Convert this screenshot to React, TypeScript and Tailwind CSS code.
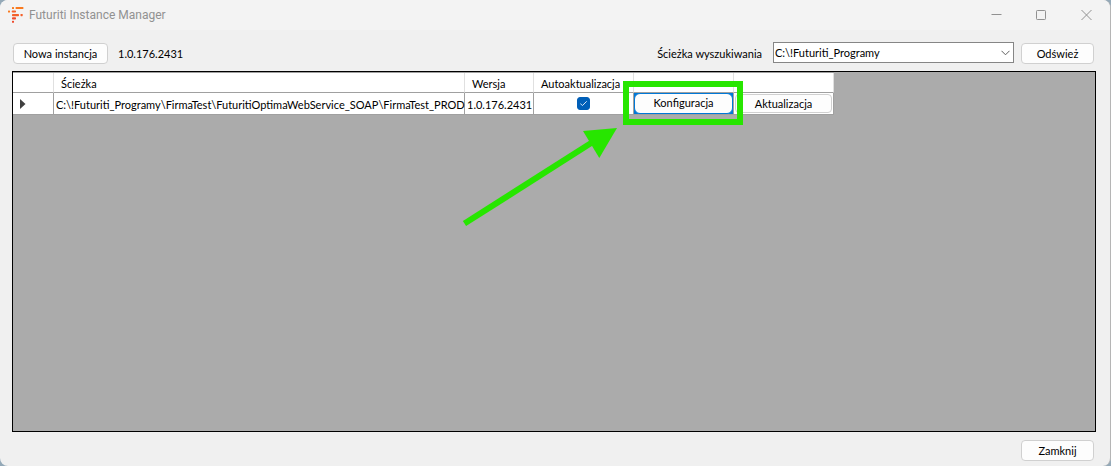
import React, { useState } from 'react';

interface Instance {
    id: string;
    path: string;
    version: string;
    autoUpdate: boolean;
}

const INITIAL_INSTANCES: Instance[] = [
    {
        id: 'prod',
        path: 'C:\\!Futuriti_Programy\\FirmaTest\\FuturitiOptimaWebService_SOAP\\FirmaTest_PROD',
        version: '1.0.176.2431',
        autoUpdate: true,
    },
];

const buttonClass = "rounded border border-[#d0d0d0] bg-[#fdfdfd] text-center hover:bg-[#e5f1fb]";
const headClass = "h-5 border-r border-b border-r-[#e0e0e0] border-b-[#a0a0a0] px-[7px] pt-0.5 pb-0 text-left leading-4 font-normal whitespace-nowrap";
const cellClass = "h-[22px] border-r border-b border-[#a0a0a0] whitespace-nowrap";

const Logo: React.FC = () => (
    <svg width="16" height="16" viewBox="0 0 16 16" aria-hidden="true">
        <g fill="#f97a1f">
            <rect x="4" y="0" width="2" height="2" rx="0.6" />
            <rect x="7.500" y="0" width="8" height="2" rx="0.8" />
            <rect x="0" y="3.600" width="2" height="2" rx="0.6" />
        </g>
        <g fill="#f4602a">
            <rect x="3.700" y="3.400" width="4.300" height="2.200" rx="0.8" />
            <rect x="4" y="7" width="7" height="2.200" rx="0.8" />
            <rect x="12.500" y="7" width="2.200" height="2.200" rx="0.6" />
        </g>
        <g fill="#ee4b2e">
            <rect x="4" y="10.300" width="4" height="2.200" rx="0.8" />
            <rect x="4" y="13.800" width="2" height="2" rx="0.6" />
        </g>
    </svg>
);

const TitleBar: React.FC = () => (
    <header className="flex h-[30px] items-center bg-[#f3f3f3] pr-px pl-2 text-[#919191]">
        <Logo />
        <h1 className="ml-[5px] flex-1 font-[Roboto,sans-serif] text-xs">Futuriti Instance Manager</h1>
        <button type="button" aria-label="Minimalizuj" className="flex h-full w-[45px] items-center justify-center hover:bg-gray-200">
            <svg width="11" height="11" viewBox="0 0 11 11" stroke="currentColor"><path d="M0.500 4.500h10" /></svg>
        </button>
        <button type="button" aria-label="Maksymalizuj" className="flex h-full w-[45px] items-center justify-center hover:bg-gray-200">
            <svg width="11" height="11" viewBox="0 0 11 11" fill="none" stroke="currentColor"><rect x="0.500" y="0.500" width="9" height="9" rx="0.800" /></svg>
        </button>
        <button type="button" aria-label="Zamknij okno" className="flex h-full w-[45px] items-center justify-center hover:bg-red-500 hover:text-white">
            <svg width="11" height="11" viewBox="0 0 11 11" stroke="currentColor"><path d="M0.500 0l10 10M10.500 0l-10 10" /></svg>
        </button>
    </header>
);

// Green frame and arrow that point at the configuration button
const Highlight: React.FC = () => (
    <>
        <div className="pointer-events-none absolute -top-3 -right-[10px] -bottom-[11px] -left-[11px] z-10 border-6 border-[#27e600]" />
        <svg className="pointer-events-none absolute top-[35px] -left-[172px] z-10" width="156" height="100" viewBox="0 0 156 100" fill="#27e600" aria-hidden="true">
            <path d="M2.500 95.500L131.500 13.500" stroke="#27e600" strokeWidth="6" />
            <path d="M155 0L121 3L137.300 30z" />
        </svg>
    </>
);

const App: React.FC = () => {
    const [instances, setInstances] = useState(INITIAL_INSTANCES);

    const toggleAutoUpdate = (id: string) => {
        setInstances(prev => prev.map(item => (item.id === id ? { ...item, autoUpdate: !item.autoUpdate } : item)));
    };

    return (
        <div className="bg-[#94a9b8]">
            <div className="flex min-h-screen flex-col overflow-hidden rounded-lg border-r border-[#b5b5b5] bg-[#f0f0f0] font-[Lato,sans-serif] text-[11px] text-black">
                <TitleBar />
                <div className="flex items-end pt-3 pr-4 pb-[7px] pl-[13px] leading-[21px]">
                    <button type="button" className={`${buttonClass} h-[21px] w-[95px] leading-4`}>Nowa instancja</button>
                    <span className="ml-[10px]">1.0.176.2431</span>
                    <label htmlFor="search-path" className="mr-[11px] ml-auto">Ścieżka wyszukiwania</label>
                    <div className="relative pb-px">
                        <select id="search-path" className="block h-[21px] w-[241px] appearance-none border border-[#868686] bg-white pr-5 pl-px leading-4">
                            <option>C:\!Futuriti_Programy</option>
                        </select>
                        <svg className="pointer-events-none absolute top-2 right-1" width="9" height="6" viewBox="0 0 9 6" fill="none" stroke="#606060" aria-hidden="true">
                            <path d="M0.500 0.800l4 4l4-4" />
                        </svg>
                    </div>
                    <button type="button" className={`${buttonClass} ml-[7px] h-[21px] w-[73px] leading-4`}>Odśwież</button>
                </div>

                <main className="mr-[14px] ml-3 flex-1 border border-black bg-[#ababab]">
                    <table className="w-[821px] table-fixed border-separate border-spacing-0 border-t border-[#a0a0a0] bg-white">
                        <colgroup>
                            <col className="w-[41px]" />
                            <col className="w-[411px]" />
                            <col className="w-[69px]" />
                            <col className="w-[100px]" />
                            <col className="w-[100px]" />
                            <col className="w-[100px]" />
                        </colgroup>
                        <thead>
                            <tr>
                                <td className={`${headClass} border-r-[#a0a0a0]`} />
                                <th className={headClass}>Ścieżka</th>
                                <th className={headClass}>Wersja</th>
                                <th className={headClass}>Autoaktualizacja</th>
                                <td className={headClass} />
                                <td className={headClass} />
                            </tr>
                        </thead>
                        <tbody>
                            {instances.map(item => (
                                <tr key={item.id}>
                                    <td className={cellClass}>
                                        <svg className="ml-[7px]" width="6" height="10" viewBox="0 0 6 10" fill="#404040" aria-hidden="true"><path d="M0 0l5.500 5l-5.500 5z" /></svg>
                                    </td>
                                    <td className={`${cellClass} pt-0.5 pl-[2px] leading-4`}>{item.path}</td>
                                    <td className={`${cellClass} pt-0.5 pl-[2px] leading-4`}>{item.version}</td>
                                    <td className={cellClass}>
                                        <div className="relative mx-auto h-[13px] w-[13px]">
                                            <input
                                                type="checkbox"
                                                aria-label="Autoaktualizacja"
                                                checked={item.autoUpdate}
                                                onChange={() => toggleAutoUpdate(item.id)}
                                                className="block h-[13px] w-[13px] appearance-none rounded-[3px] border border-[#005fb8] checked:bg-[#005fb8]"
                                            />
                                            {item.autoUpdate && (
                                                <svg className="pointer-events-none absolute top-[3px] left-[3px]" width="7" height="7" viewBox="0 0 7 7" fill="none" stroke="#d5e5f5" aria-hidden="true">
                                                    <path d="M0.300 3.500l2.100 2.100l4.300-4.300" />
                                                </svg>
                                            )}
                                        </div>
                                    </td>
                                    <td className={`${cellClass} relative`}>
                                        <div className="bg-[#0078d7]">
                                            <button type="button" className="block h-[21px] w-full rounded-md border border-[#0078d7] bg-[#fdfdfd]">Konfiguracja</button>
                                        </div>
                                        <Highlight />
                                    </td>
                                    <td className={`${cellClass} px-px`}>
                                        <button type="button" className={`${buttonClass} block h-[19px] w-full leading-4`}>Aktualizacja</button>
                                    </td>
                                </tr>
                            ))}
                        </tbody>
                    </table>
                </main>

                <footer className="flex justify-end pt-2 pr-4 pb-[5px]">
                    <button type="button" className={`${buttonClass} h-[21px] w-[73px] leading-4`}>Zamknij</button>
                </footer>
            </div>
        </div>
    );
};

export default App;
